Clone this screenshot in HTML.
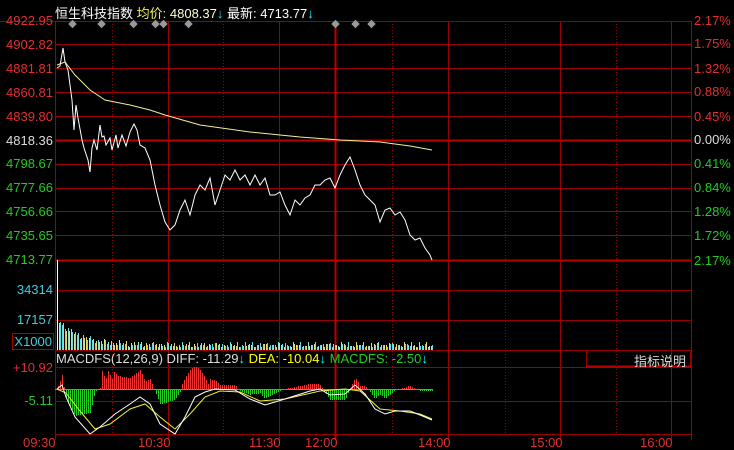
<!DOCTYPE html>
<html><head><meta charset="utf-8"><style>
body{margin:0;background:#000;width:734px;height:450px;overflow:hidden;font-family:"Liberation Sans","Noto Sans CJK SC",sans-serif;font-size:13px}
.l{position:absolute;right:681px;text-align:right;white-space:nowrap}
.r{position:absolute;left:694px;white-space:nowrap}
.t{position:absolute;white-space:nowrap}
</style></head><body>
<svg id="s" width="734" height="450" style="position:absolute;left:0;top:0" shape-rendering="crispEdges"></svg>
<div class="t" style="left:55px;top:3px;color:#fff">恒生科技指数 <span style="color:#ee6">均价:</span> <span style="color:#ffc">4808.37</span><span style="color:#0ff">↓</span> 最新: <span style="color:#fff">4713.77</span><span style="color:#0ff">↓</span></div>
<div class="l" style="top:13px;color:#e03030">4922.95</div>
<div class="l" style="top:37px;color:#e03030">4902.82</div>
<div class="l" style="top:61px;color:#e03030">4881.81</div>
<div class="l" style="top:85px;color:#e03030">4860.81</div>
<div class="l" style="top:109px;color:#e03030">4839.80</div>
<div class="l" style="top:133px;color:#ddd">4818.36</div>
<div class="l" style="top:156px;color:#2c2">4798.67</div>
<div class="l" style="top:180px;color:#2c2">4777.66</div>
<div class="l" style="top:204px;color:#2c2">4756.66</div>
<div class="l" style="top:228px;color:#2c2">4735.65</div>
<div class="l" style="top:252px;color:#2c2">4713.77</div>
<div class="l" style="top:282px;color:#4cd">34314</div>
<div class="l" style="top:312px;color:#4cd">17157</div>
<div class="l" style="top:333px;color:#4cd;border:1px solid #a00;padding:0 1px;right:680px">X1000</div>
<div class="l" style="top:360px;color:#e03030">+10.92</div>
<div class="l" style="top:393px;color:#2c2">-5.11</div>
<div class="r" style="top:13px;color:#e03030">2.17%</div>
<div class="r" style="top:36px;color:#e03030">1.75%</div>
<div class="r" style="top:61px;color:#e03030">1.32%</div>
<div class="r" style="top:84px;color:#e03030">0.88%</div>
<div class="r" style="top:109px;color:#e03030">0.45%</div>
<div class="r" style="top:132px;color:#ddd">0.00%</div>
<div class="r" style="top:156px;color:#2c2">0.41%</div>
<div class="r" style="top:180px;color:#2c2">0.84%</div>
<div class="r" style="top:204px;color:#2c2">1.28%</div>
<div class="r" style="top:228px;color:#2c2">1.72%</div>
<div class="r" style="top:253px;color:#2c2">2.17%</div>
<div class="t" style="left:56px;top:351px;color:#ddd">MACDFS(12,26,9) DIFF: -11.29<span style="color:#0ff">↓</span> <span style="color:#ff0">DEA: -10.04</span><span style="color:#0ff">↓</span> <span style="color:#2c2">MACDFS: -2.50</span><span style="color:#0ff">↓</span></div>
<div class="t" style="left:634px;top:351px;color:#ddd">指标说明</div>
<div class="t" style="left:23px;top:435px;color:#e03030">09:30</div>
<div class="t" style="left:138px;top:435px;color:#e03030">10:30</div>
<div class="t" style="left:249px;top:435px;color:#e03030">11:30</div>
<div class="t" style="left:305px;top:435px;color:#e03030">12:00</div>
<div class="t" style="left:418px;top:435px;color:#e03030">14:00</div>
<div class="t" style="left:530px;top:435px;color:#e03030">15:00</div>
<div class="t" style="left:640px;top:435px;color:#e03030">16:00</div>
<script>
var s=document.getElementById('s'),h='';
function L(x1,y1,x2,y2,c,w,d){h+='<line x1="'+x1+'" y1="'+y1+'" x2="'+x2+'" y2="'+y2+'" stroke="'+c+'" stroke-width="'+(w||1)+'"'+(d?' stroke-dasharray="1,2"':'')+'/>';}
var R='#990000';
[21,44,68,92,116,164,188,211,235,290,320,350,367,401,434].forEach(function(y){L(55,y+.5,691,y+.5,R);});
L(55,140.5,691,140.5,'#b00',2);L(55,260.5,691,260.5,'#b00',2);
L(0,21.5,55,21.5,R);
h+='<rect x="586.5" y="350.5" width="104" height="16" fill="none" stroke="'+R+'"/>';
L(586,366.5,691,366.5,'#b00',2);
[55,168,279,448,560,671,691].forEach(function(x){L(x+.5,21,x+.5,440,R);});
L(335.5,21,335.5,440,'#b00',2);
[112,223,392,505,616].forEach(function(x){L(x+.5,21,x+.5,435,'#900',1,1);});
[73,102,134,156,164,189,336,356,372].forEach(function(x){h+='<rect x="'+(x-3.5)+'" y="21" width="6" height="6" fill="#999" transform="rotate(45 '+(x-0.5)+' 24)" shape-rendering="auto"/>';});
var p="57,68 60,66 63,48 65,62 68,70 72,100 74,130 76,105 78,118 82,140 84,148 88,160 90,172 92,148 94,140 97,150 100,125 102,137 104,136 106,145 110,138 112,150 116,135 118,148 122,135 126,146 130,132 134,124 137,130 140,145 145,148 150,160 155,185 160,205 165,222 170,230 175,225 180,210 185,200 190,215 195,195 200,185 205,190 210,178 215,205 220,190 225,175 230,180 235,170 240,180 245,175 250,185 255,175 260,185 265,178 270,195 275,195 280,192 285,205 290,215 295,200 300,205 305,198 310,195 315,185 320,185 325,180 330,178 335,188 340,175 345,165 350,157 355,170 360,185 365,195 370,200 375,205 380,222 385,210 390,208 395,215 400,212 405,220 410,235 415,240 420,238 425,248 430,255 432,260";
var a="57,65 65,62 75,75 90,90 105,100 130,105 150,110 165,115 200,125 250,132 300,137 340,140 380,142 410,146 432,150";
var B='';
var cols=['#6dd','#dd6','#6dd','#8dd','#dd8'];
for(var x=57;x<=432;x+=1.5){var xi=Math.round(x);var v=xi==57?260:350-(Math.max(3,26*Math.exp(-(xi-57)/22)+5+2*Math.sin(xi*1.7)+1.5*Math.cos(xi*0.9)));B+='<line x1="'+xi+'.5" y1="350" x2="'+xi+'.5" y2="'+v.toFixed(0)+'" stroke="'+(xi==57?'#fff':cols[xi%5])+'"/>';}
var D=[[57,0],[62,4],[66,-8],[75,-28],[90,-45],[100,-38],[115,-25],[130,-15],[140,-8],[150,-15],[160,-35],[175,-45],[185,-28],[195,-8],[205,-3],[215,0],[235,-1],[250,-10],[265,-16],[285,-10],[310,-2],[320,0],[330,-6],[345,-5],[355,4],[365,-5],[375,-20],[385,-25],[395,-22],[410,-22],[425,-28],[432,-31]];
var E=[[57,0],[66,-4],[80,-22],[95,-40],[110,-35],[130,-20],[145,-15],[160,-28],[175,-40],[190,-25],[205,-8],[220,-2],[240,-3],[260,-12],[285,-10],[320,-2],[345,0],[360,-2],[380,-20],[400,-22],[420,-25],[432,-30]];
function pl(A){return A.map(function(q){return q[0]+','+(389-q[1])}).join(' ');}
function interp(A,x){for(var i=1;i<A.length;i++)if(x<=A[i][0]){var t=(x-A[i-1][0])/(A[i][0]-A[i-1][0]);return A[i-1][1]+t*(A[i][1]-A[i-1][1]);}return A[A.length-1][1];}
var M='';
for(var x=58;x<=432;x+=2){var m=(interp(D,x)-interp(E,x))*2.2;if(x>100&&x<118)m=14+4*Math.sin(x);if(x>180&&x<210)m=22*Math.sin((x-180)/30*Math.PI);var y2=389-m;M+='<line x1="'+x+'.5" y1="389" x2="'+x+'.5" y2="'+y2.toFixed(0)+'" stroke="'+(m>0?'#e33':'#2c2')+'"/>';}
h+=B+M;
L(55,389.5,432,389.5,'#888');
h+='<polyline points="'+a+'" fill="none" stroke="#ee9" shape-rendering="auto"/>';
h+='<polyline points="'+p+'" fill="none" stroke="#fff" shape-rendering="auto"/>';
h+='<polyline points="'+pl(E)+'" fill="none" stroke="#ee3" shape-rendering="auto"/>';
h+='<polyline points="'+pl(D)+'" fill="none" stroke="#fff" shape-rendering="auto"/>';
s.innerHTML=h;
</script>
</body></html>
